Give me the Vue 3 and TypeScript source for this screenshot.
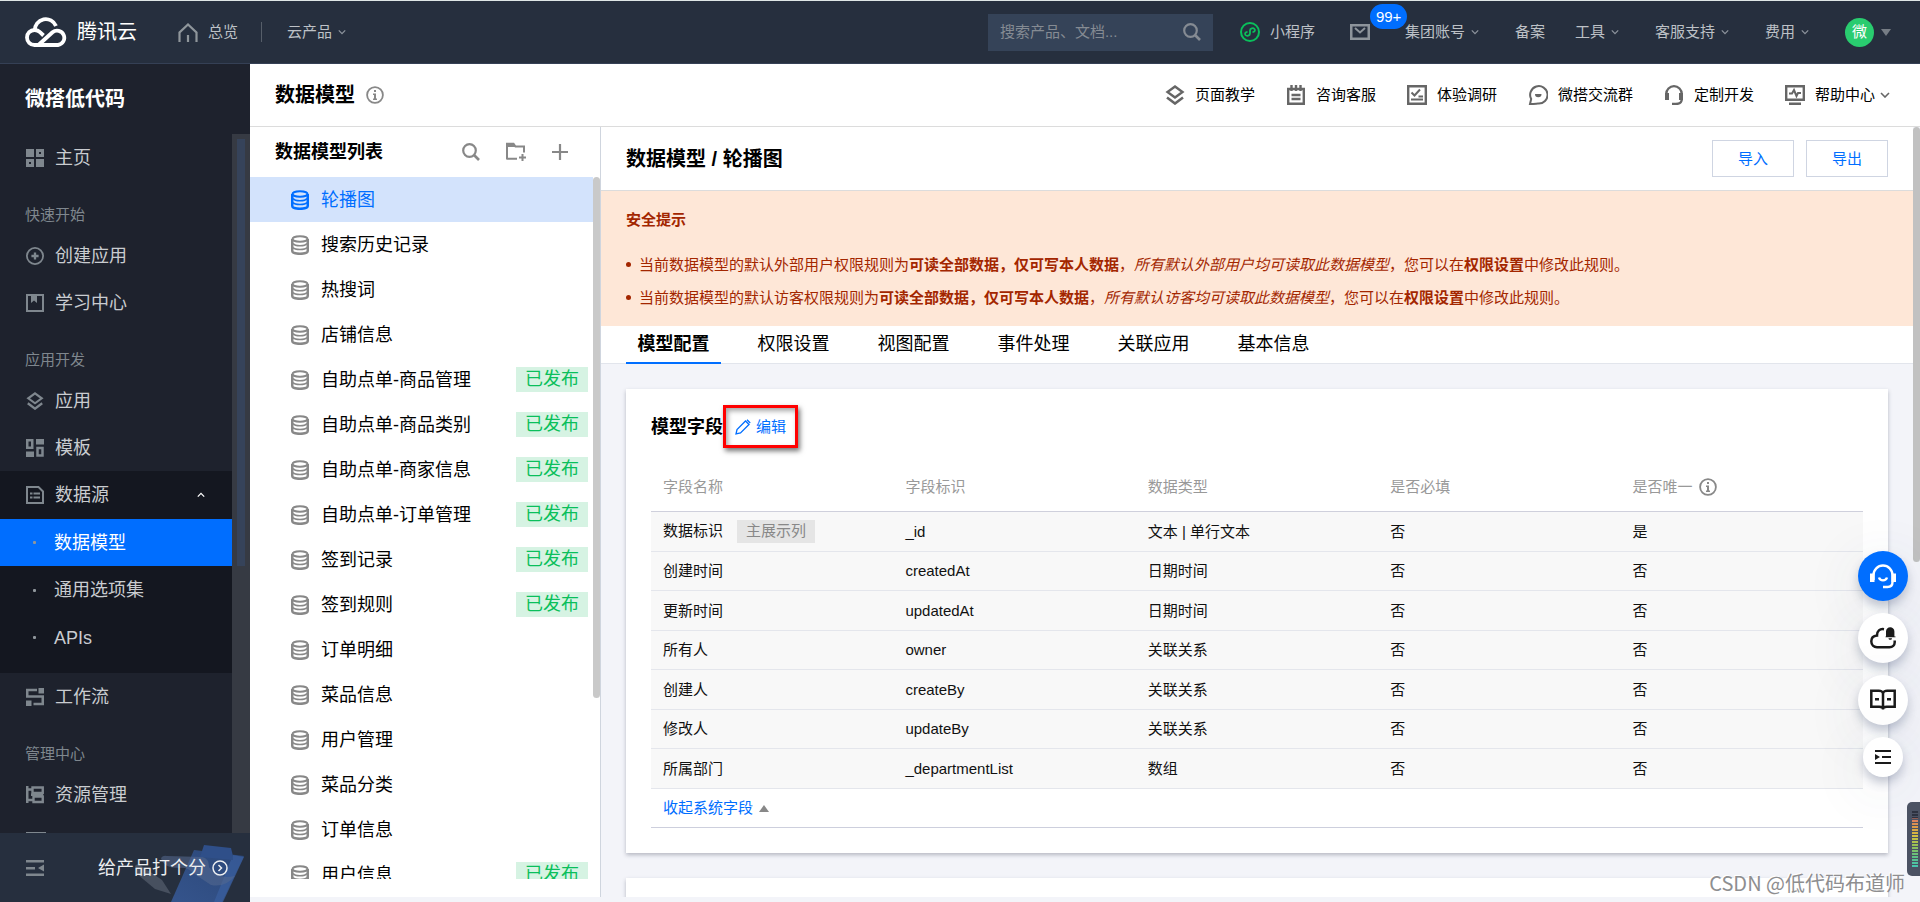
<script setup lang="ts">
import { ref } from 'vue'

interface NavItem { icon: string; label: string }
interface Model { name: string; published: boolean }
interface Field { name: string; key: string; type: string; required: string; unique: string; main?: boolean }

const accountLinks = [
  { label: '集团账号', menu: true },
  { label: '备案', menu: false },
  { label: '工具', menu: true },
  { label: '客服支持', menu: true },
  { label: '费用', menu: true },
]

const quickLinks: NavItem[] = [
  { icon: 'layers', label: '页面教学' },
  { icon: 'note', label: '咨询客服' },
  { icon: 'survey', label: '体验调研' },
  { icon: 'chat', label: '微搭交流群' },
  { icon: 'headset', label: '定制开发' },
  { icon: 'monitor', label: '帮助中心' },
]

const startItems: NavItem[] = [
  { icon: 'plus-circle', label: '创建应用' },
  { icon: 'book', label: '学习中心' },
]
const devItems: NavItem[] = [
  { icon: 'layers', label: '应用' },
  { icon: 'template', label: '模板' },
]
const sourceItems = ['数据模型', '通用选项集', 'APIs']

const models: Model[] = [
  { name: '轮播图', published: false },
  { name: '搜索历史记录', published: false },
  { name: '热搜词', published: false },
  { name: '店铺信息', published: false },
  { name: '自助点单-商品管理', published: true },
  { name: '自助点单-商品类别', published: true },
  { name: '自助点单-商家信息', published: true },
  { name: '自助点单-订单管理', published: true },
  { name: '签到记录', published: true },
  { name: '签到规则', published: true },
  { name: '订单明细', published: false },
  { name: '菜品信息', published: false },
  { name: '用户管理', published: false },
  { name: '菜品分类', published: false },
  { name: '订单信息', published: false },
  { name: '用户信息', published: true },
]

const tabs = ['模型配置', '权限设置', '视图配置', '事件处理', '关联应用', '基本信息']

const fields: Field[] = [
  { name: '数据标识', key: '_id', type: '文本 | 单行文本', required: '否', unique: '是', main: true },
  { name: '创建时间', key: 'createdAt', type: '日期时间', required: '否', unique: '否' },
  { name: '更新时间', key: 'updatedAt', type: '日期时间', required: '否', unique: '否' },
  { name: '所有人', key: 'owner', type: '关联关系', required: '否', unique: '否' },
  { name: '创建人', key: 'createBy', type: '关联关系', required: '否', unique: '否' },
  { name: '修改人', key: 'updateBy', type: '关联关系', required: '否', unique: '否' },
  { name: '所属部门', key: '_departmentList', type: '数组', required: '否', unique: '否' },
]

const currentModel = ref(0)
const currentTab = ref(0)
const keyword = ref('')
</script>

<template>
  <div class="app">
    <svg class="sprite" aria-hidden="true">
      <symbol id="i-chevron" viewBox="0 0 10 6"><path d="M1 1l4 4 4-4" fill="none" stroke="currentColor" stroke-width="1.6" /></symbol>
      <symbol id="i-search" viewBox="0 0 18 18"><circle cx="7.5" cy="7.5" r="6.3" fill="none" stroke="currentColor" stroke-width="2.2" /><path d="M12 12l5 5" stroke="currentColor" stroke-width="2.6" /></symbol>
      <symbol id="i-info" viewBox="0 0 18 18"><circle cx="9" cy="9" r="7.9" fill="none" stroke="currentColor" stroke-width="1.8" /><path d="M8 4h2v2H8zM7 7.5h3v5h1V14H7v-1.500h1V9H7z" fill="currentColor" /></symbol>
      <symbol id="i-home" viewBox="0 0 20 19"><path d="M1.500 19V9.500L10 1.500l8.500 8V19M10 12v7" fill="none" stroke="currentColor" stroke-width="2.2" /></symbol>
      <symbol id="i-mini" viewBox="0 0 20 20"><circle cx="10" cy="10" r="9" fill="none" stroke="currentColor" stroke-width="2" /><path d="M7.500 9.800c-2.200.2-3 1.800-2 3.200 1.300 1.500 4.500.8 4.500-1.500V8.500c0-2.300 3.200-3 4.500-1.500 1 1.400.2 3-2 3.200" fill="none" stroke="currentColor" stroke-width="1.800" /></symbol>
      <symbol id="i-mail" viewBox="0 0 20 16"><rect x="1.250" y="1.250" width="17.500" height="13.500" fill="none" stroke="currentColor" stroke-width="2.500" /><path d="M5 4l5 4.500L15 4" fill="none" stroke="currentColor" stroke-width="2" /></symbol>
      <symbol id="i-grid" viewBox="0 0 18 18"><path d="M0 0h8v8H0zM10 10h8v8h-8z" fill="currentColor" /><path d="M11.500 1.500h5v5h-5zM1.500 11.500h5v5h-5z" fill="none" stroke="currentColor" stroke-width="3" /></symbol>
      <symbol id="i-plus-circle" viewBox="0 0 20 20"><circle cx="10" cy="10" r="9" fill="none" stroke="currentColor" stroke-width="2" /><path d="M10 6v8M6 10h8" stroke="currentColor" stroke-width="2.600" /></symbol>
      <symbol id="i-book" viewBox="0 0 18 18"><rect x="1" y="1" width="16" height="16" fill="none" stroke="currentColor" stroke-width="2" /><path d="M5 2h6v7L8 6.500 5 9z" fill="currentColor" /></symbol>
      <symbol id="i-layers" viewBox="0 0 20 20"><path d="M10 1.500l7.500 5.500L10 12.500 2.500 7z" fill="none" stroke="currentColor" stroke-width="2.400" /><path d="M2 12.500l8 6 8-6" fill="none" stroke="currentColor" stroke-width="2.600" /></symbol>
      <symbol id="i-template" viewBox="0 0 18 18"><path d="M1.250 1.250h5v7.500h-5zM11.500 9h5v7.500h-5z" fill="none" stroke="currentColor" stroke-width="2.500" /><path d="M10 0h8v5.500h-8zM0 12.500h8V18H0z" fill="currentColor" /></symbol>
      <symbol id="i-source" viewBox="0 0 18 18"><path d="M1 1h11.500L17 5.500V17H1z" fill="none" stroke="currentColor" stroke-width="2" /><path d="M4 6.500h2.500v2H4zM7.500 6.500H14v2H7.500zM4 10.500h2.500v2H4zM7.500 10.500H14v2H7.500z" fill="currentColor" /></symbol>
      <symbol id="i-flow" viewBox="0 0 18 18"><path d="M11 2H1.250v6.500h15.500V16H7.500" fill="none" stroke="currentColor" stroke-width="2.500" /><path d="M12.500 0H18v5.500h-5.500zM0 12.500h5.500V18H0z" fill="currentColor" /></symbol>
      <symbol id="i-resource" viewBox="0 0 18 18"><path d="M1.250 0v17M0 3.500h6M1 14h6" fill="none" stroke="currentColor" stroke-width="2.500" /><path d="M6.500 1.500h10.250V7H6.500zM7.500 10.500h9.250V16H7.500zM5 8.800h12" fill="none" stroke="currentColor" stroke-width="2.400" /></symbol>
      <symbol id="i-panel" viewBox="0 0 20 20"><path d="M0 0h20v2H0zM0 17h20v2H0zM1 2h2v15H1z" fill="currentColor" /></symbol>
      <symbol id="i-collapse" viewBox="0 0 18 16"><path d="M0 0h18v2.400H0zM0 7h9v2.400H0zM0 13.600h18V16H0zM18 4.500v7L12 8z" fill="currentColor" /></symbol>
      <symbol id="i-note" viewBox="0 0 20 20"><path d="M2.200 4h15.600v14.800H2.200zM5.500 0v6M10 0v6M14.500 0v6M5.500 10h9M5.500 14h9" fill="none" stroke="currentColor" stroke-width="2.400" /></symbol>
      <symbol id="i-survey" viewBox="0 0 20 20"><path d="M1.200 1.200h17.600v17.600H1.200z" fill="none" stroke="currentColor" stroke-width="2.400" /><path d="M4.500 7.500l3 3 5.500-6M4 14.500h12M11.500 11.500H16" fill="none" stroke="currentColor" stroke-width="2" /></symbol>
      <symbol id="i-chat" viewBox="0 0 20 20"><path d="M2 19l1.200-5A8.700 8.700 0 1 1 10 18.500c-1.500 0-3 .5-8 .5z" fill="none" stroke="currentColor" stroke-width="2" /><path d="M7 9h6.500a3.250 3.250 0 0 1-6.500 0z" fill="currentColor" /></symbol>
      <symbol id="i-headset" viewBox="0 0 20 20"><path d="M2.200 14V9a7.800 7.800 0 0 1 15.600 0v5c0 3-2 5-6 5H8" fill="none" stroke="currentColor" stroke-width="2.300" /><path d="M1 8h4v7H1zM15 8h4v7h-4z" fill="currentColor" /></symbol>
      <symbol id="i-monitor" viewBox="0 0 20 20"><path d="M1.200 1.200h17.600v13.600H1.200z" fill="none" stroke="currentColor" stroke-width="2.400" /><path d="M4 8.500h3l2-3.500 2.500 6L13 8h3" fill="none" stroke="currentColor" stroke-width="2" /><path d="M4 17.500h12V20H4z" fill="currentColor" /></symbol>
      <symbol id="i-folder" viewBox="0 0 20 19"><path d="M1 17V1.200h6.500L9.500 4H18v6M1 16.200h10" fill="none" stroke="currentColor" stroke-width="2" /><path d="M1 1h7l1.500 3.500H1zM15.500 11.500h2V18.500h-2zM13 14h7v2h-7z" fill="currentColor" /></symbol>
      <symbol id="i-plus" viewBox="0 0 16 16"><path d="M8 0v16M0 8h16" stroke="currentColor" stroke-width="2.200" /></symbol>
      <symbol id="i-database" viewBox="0 0 18 20"><path d="M1.250 4v12c0 1.600 3 2.800 7.750 2.800s7.750-1.200 7.750-2.800V4" fill="none" stroke="currentColor" stroke-width="2.500" /><ellipse cx="9" cy="4" rx="7.500" ry="2.800" fill="none" stroke="currentColor" stroke-width="2" /><path d="M2 8.500q1.500 2.200 7 2.200t7-2.200M2 12.500q1.500 2 7 2t7-2" fill="none" stroke="currentColor" stroke-width="1.600" /></symbol>
      <symbol id="i-pencil" viewBox="0 0 16 16"><path d="M1 15l1-4.500L10.500 2 14 5.500 5.500 14zM12 .8L15.200 4" fill="none" stroke="currentColor" stroke-width="1.300" /></symbol>
      <symbol id="i-support" viewBox="0 0 26 26"><path d="M3.500 17v-5a9.500 9.500 0 0 1 19 0v7c0 3-1.500 5-5 5H13" fill="none" stroke="currentColor" stroke-width="2.400" /><path d="M0 10.500h4.500v8.500H0zM21.500 10.500H26v8.500h-4.500z" fill="currentColor" /><path d="M9 14.500a4.200 4.200 0 0 0 8 0" fill="none" stroke="currentColor" stroke-width="2.400" /></symbol>
      <symbol id="i-cloud-bell" viewBox="0 0 26 22"><path d="M14 2.200c-4-.8-7.200 2-7 6.300-3.400.3-5.700 2.600-5.700 5.800 0 3.600 2.500 5.900 5.700 5.900h12.500c3 0 5.200-2.200 5.200-5v-1.700" fill="none" stroke="currentColor" stroke-width="2.500" /><path d="M16 9.500V4.500a4.200 4.200 0 0 1 8.400 0v5h1.100v.8H15.500v-.8zM18.500 11.300h3.500c0 1-.8 1.500-1.700 1.500s-1.800-.5-1.800-1.500z" fill="currentColor" /></symbol>
      <symbol id="i-read" viewBox="0 0 26 21"><path d="M1.300 1.300h7.500C11 1.300 13 2.500 13 4c0-1.500 2-2.700 4.200-2.700h7.500v16h-8c-2 0-3.700.7-3.700 1.700 0-1-1.700-1.700-3.700-1.700h-8zM13 4v16" fill="none" stroke="currentColor" stroke-width="2.500" /><path d="M5 8.500h4V11H5zM17 8.500h4V11h-4z" fill="currentColor" /></symbol>
      <symbol id="i-expand" viewBox="0 0 16 14"><path d="M0 0h16v2H0zM7 6h9v2H7zM0 12h16v2H0zM0 4v6l5-3z" fill="currentColor" /></symbol>
    </svg>

    <header class="topbar">
      <a class="brand" href="#">
        <svg class="brand-mark" viewBox="0 0 42 30" aria-hidden="true">
          <path d="M18.500 18.500L15 15.200A7.500 7.500 0 0 0 9.500 13a7.500 7.500 0 0 0 0 15H33a7.200 7.200 0 1 0-5.500-12.700L14 27.500" fill="none" stroke="#fff" stroke-width="3.800" />
          <path d="M9.800 13.500A11 11 0 0 1 31 9" fill="none" stroke="#fff" stroke-width="3.800" />
        </svg>
        <span>腾讯云</span>
      </a>
      <a class="top-link home" href="#"><svg class="home-icon"><use href="#i-home" /></svg>总览</a>
      <span class="divider"></span>
      <a class="top-link" href="#">云产品<svg class="chev"><use href="#i-chevron" /></svg></a>
      <form class="search" @submit.prevent>
        <input v-model="keyword" aria-label="搜索" placeholder="搜索产品、文档..." />
        <button type="submit" aria-label="搜索"><svg class="s18"><use href="#i-search" /></svg></button>
      </form>
      <nav class="account">
        <a class="top-link mini" href="#"><svg class="s20"><use href="#i-mini" /></svg>小程序</a>
        <a class="mail" href="#" aria-label="站内信"><svg class="mail-icon"><use href="#i-mail" /></svg><span class="badge">99+</span></a>
        <a v-for="link in accountLinks" :key="link.label" class="top-link" :class="{ menu: link.menu }" href="#">{{ link.label }}<svg v-if="link.menu" class="chev"><use href="#i-chevron" /></svg></a>
        <button class="user" type="button"><span class="avatar">微</span><span class="caret down"></span></button>
      </nav>
    </header>

    <div class="body">
      <aside class="sidebar">
        <h1>微搭低代码</h1>
        <div class="side-scroll">
          <nav class="side-nav">
            <a class="side-item" href="#"><svg class="s18"><use href="#i-grid" /></svg>主页</a>
            <p class="side-label">快速开始</p>
            <a v-for="item in startItems" :key="item.label" class="side-item" href="#"><svg class="s18"><use :href="'#i-' + item.icon" /></svg>{{ item.label }}</a>
            <p class="side-label">应用开发</p>
            <a v-for="item in devItems" :key="item.label" class="side-item" href="#"><svg class="s18"><use :href="'#i-' + item.icon" /></svg>{{ item.label }}</a>
            <div class="side-group">
              <button class="side-item" type="button"><svg class="s18"><use href="#i-source" /></svg>数据源<svg class="chev up"><use href="#i-chevron" /></svg></button>
              <a v-for="(item, i) in sourceItems" :key="item" class="side-item sub" :class="{ active: i === 0 }" href="#"><span class="dot"></span>{{ item }}</a>
            </div>
            <a class="side-item" href="#"><svg class="s18"><use href="#i-flow" /></svg>工作流</a>
            <p class="side-label">管理中心</p>
            <a class="side-item" href="#"><svg class="s18"><use href="#i-resource" /></svg>资源管理</a>
            <a class="side-item" href="#" aria-label="更多"><svg class="s20"><use href="#i-panel" /></svg></a>
          </nav>
          <div class="side-track"><div class="side-thumb"></div></div>
        </div>
        <div class="side-foot">
          <svg class="foot-art" viewBox="0 0 110 58" aria-hidden="true">
            <defs>
              <linearGradient id="board" x1="1" y1="0" x2="0" y2="1"><stop offset="0" stop-color="#2b4778" /><stop offset="1" stop-color="#35548c" /></linearGradient>
            </defs>
            <path d="M0 22q2-3 5-1l22 15 9 14-16-5L2 30z" fill="#47505f" />
            <path d="M59 6l50 6-22 46H36z" fill="url(#board)" />
            <path d="M98 11l11 2-21 45h-9z" fill="#3b5f9f" opacity=".7" />
            <path d="M26 14q2-3 6-2l36 1q6 2 6 10 8 13 26 9-10 12-24 9l-18-12q-5-6-14-5-16 0-18-10z" fill="#566a90" opacity=".55" />
            <path d="M69 1l27 3q2 6 2 12l-33-3z" fill="#2f4f89" />
          </svg>
          <button type="button" aria-label="收起菜单"><svg class="collapse"><use href="#i-collapse" /></svg></button>
          <a class="rate" href="#">给产品打个分
            <svg class="rate-icon" viewBox="0 0 16 16"><circle cx="8" cy="8" r="7" fill="none" stroke="currentColor" stroke-width="1.500" /><path d="M6.500 5l3 3-3 3" fill="none" stroke="currentColor" stroke-width="1.500" /></svg>
          </a>
        </div>
      </aside>

      <div class="page">
        <div class="page-head">
          <h2>数据模型</h2>
          <svg class="s18 grey"><use href="#i-info" /></svg>
          <nav class="quick">
            <a v-for="(item, i) in quickLinks" :key="item.label" href="#"><svg class="s20"><use :href="'#i-' + item.icon" /></svg>{{ item.label }}<svg v-if="i === quickLinks.length - 1" class="help-chev"><use href="#i-chevron" /></svg></a>
          </nav>
        </div>

        <div class="columns">
          <section class="models">
            <div class="models-head">
              <h3>数据模型列表</h3>
              <button type="button" aria-label="搜索模型"><svg class="s18"><use href="#i-search" /></svg></button>
              <button type="button" aria-label="新建分组"><svg class="s20"><use href="#i-folder" /></svg></button>
              <button type="button" aria-label="新建模型"><svg class="s16"><use href="#i-plus" /></svg></button>
            </div>
            <div class="models-body">
              <ul>
                <li v-for="(m, i) in models" :key="m.name">
                  <button type="button" class="model" :class="{ active: i === currentModel }" @click="currentModel = i">
                    <svg class="db"><use href="#i-database" /></svg>
                    <span class="model-name">{{ m.name }}</span>
                    <span v-if="m.published" class="published">已发布</span>
                  </button>
                </li>
              </ul>
              <div class="models-thumb"></div>
            </div>
          </section>

          <main class="detail">
            <div class="detail-inner">
              <div class="detail-head">
                <h2>数据模型 / 轮播图</h2>
                <button type="button">导入</button>
                <button type="button">导出</button>
              </div>
              <div class="notice">
                <h4>安全提示</h4>
                <ul>
                  <li>当前数据模型的默认外部用户权限规则为<b>可读全部数据，仅可写本人数据</b>，<i>所有默认外部用户均可读取此数据模型</i>，您可以在<b>权限设置</b>中修改此规则。</li>
                  <li>当前数据模型的默认访客权限规则为<b>可读全部数据，仅可写本人数据</b>，<i>所有默认访客均可读取此数据模型</i>，您可以在<b>权限设置</b>中修改此规则。</li>
                </ul>
              </div>
              <div class="tabs" role="tablist">
                <button v-for="(t, i) in tabs" :key="t" type="button" role="tab" :aria-selected="i === currentTab" :class="{ active: i === currentTab }" @click="currentTab = i">{{ t }}</button>
              </div>
              <div class="cards">
                <section class="card">
                  <div class="card-head">
                    <h3>模型字段</h3>
                    <button type="button" class="edit"><svg class="s16"><use href="#i-pencil" /></svg>编辑</button>
                  </div>
                  <table>
                    <thead>
                      <tr>
                        <th>字段名称</th><th>字段标识</th><th>数据类型</th><th>是否必填</th>
                        <th><span class="th-info">是否唯一<svg class="s18"><use href="#i-info" /></svg></span></th>
                      </tr>
                    </thead>
                    <tbody>
                      <tr v-for="f in fields" :key="f.key">
                        <td>{{ f.name }}<span v-if="f.main" class="main-tag">主展示列</span></td>
                        <td>{{ f.key }}</td>
                        <td>{{ f.type }}</td>
                        <td>{{ f.required }}</td>
                        <td>{{ f.unique }}</td>
                      </tr>
                      <tr class="fold"><td colspan="5"><button type="button">收起系统字段<span class="caret up-caret"></span></button></td></tr>
                    </tbody>
                  </table>
                </section>
                <section class="card next"></section>
              </div>
            </div>
            <div class="detail-track"><div class="detail-thumb"></div></div>
          </main>
        </div>
      </div>
    </div>

    <div class="floats">
      <button type="button" class="primary" aria-label="在线客服"><svg class="f26"><use href="#i-support" /></svg></button>
      <button type="button" aria-label="消息"><svg class="f26"><use href="#i-cloud-bell" /></svg></button>
      <button type="button" aria-label="文档"><svg class="f26"><use href="#i-read" /></svg></button>
      <button type="button" class="small" aria-label="展开"><svg class="s16"><use href="#i-expand" /></svg></button>
    </div>
    <div class="meter"><div class="meter-bars"></div></div>
    <div class="watermark">CSDN @低代码布道师</div>
  </div>
</template>

<style>
body { margin: 0; }
</style>

<style scoped>
* { box-sizing: border-box; }
.app {
  position: relative;
  display: flex;
  flex-direction: column;
  height: 100vh;
  overflow: hidden;
  background: #f3f4f9;
  color: #000;
  font: 15px/20px "Liberation Sans", "Noto Sans CJK SC", sans-serif;
}
h1, h2, h3, h4, p, ul { margin: 0; padding: 0; }
ul { list-style: none; }
a { color: inherit; text-decoration: none; }
button { margin: 0; padding: 0; border: 0; background: none; color: inherit; font: inherit; cursor: pointer; }
svg { display: block; flex: none; }
.sprite { position: absolute; width: 0; height: 0; }
.s16 { width: 16px; height: 16px; }
.s18 { width: 18px; height: 18px; }
.s20 { width: 20px; height: 20px; }
.f26 { width: 26px; height: 26px; }
.chev { width: 8px; height: 6px; margin-left: 6px; color: #8c939c; }
.caret { border: 5px solid transparent; }

.topbar {
  flex: none;
  display: flex;
  align-items: center;
  height: 64px;
  padding: 0 29px 0 25px;
  border-top: 1px solid #dfe6e6;
  border-bottom: 1px solid #354055;
  background: #262f3e;
  color: #bdc1c6;
}
.brand { display: flex; align-items: center; gap: 10px; color: #fff; font-size: 20px; }
.brand-mark { width: 42px; height: 30px; }
.top-link { display: flex; align-items: center; white-space: nowrap; }
.home { gap: 10px; margin-left: 41px; }
.home-icon { width: 20px; height: 19px; color: #8f969b; }
.divider { width: 1px; height: 20px; margin: 0 25px 0 23px; background: #565e69; }
.search { display: flex; width: 225px; height: 37px; margin-left: auto; margin-right: 27px; padding: 0 12px; background: #354358; }
.search input { flex: 1; min-width: 0; padding: 0; border: 0; outline: 0; background: none; color: #fff; font: inherit; }
.search input::placeholder { color: #858b93; opacity: 1; }
.search button { color: #858b93; }
.account { display: flex; align-items: center; gap: 30px; }
.mini { gap: 10px; padding-right: 5px; }
.mini svg { color: #0abf5b; }
.mail { position: relative; padding-right: 5px; color: #8d949b; }
.mail-icon { width: 20px; height: 16px; }
.badge {
  position: absolute;
  left: 20px;
  bottom: 11px;
  height: 25px;
  padding: 0 6px;
  border-radius: 13px;
  background: #006eff;
  color: #fff;
  line-height: 25px;
}
.menu { padding-right: 6px; }
.user { display: flex; align-items: center; gap: 7px; }
.avatar { width: 29px; height: 29px; border-radius: 50%; background: #29cc6f; color: #fff; line-height: 28px; }
.down { margin-top: 5px; border-top: 7px solid #767d85; }

.body { flex: 1; display: flex; min-height: 0; }
.sidebar { flex: none; display: flex; flex-direction: column; width: 250px; background: #1e222d; color: #c9ccd0; }
.sidebar h1 { height: 70px; padding-left: 25px; color: #fff; font-size: 20px; line-height: 71px; }
.side-scroll { flex: 1; display: flex; min-height: 0; }
.side-nav { flex: 1; overflow: hidden; }
.side-item { display: flex; align-items: center; gap: 11px; width: 100%; height: 47px; padding-left: 26px; font-size: 18px; white-space: nowrap; }
.side-item svg { color: #7f878e; }
.side-label { padding: 17px 0 0 25px; color: #7f878e; line-height: 34px; }
.side-group { padding-bottom: 12px; background: #141720; }
.side-group .side-item { height: 48px; }
.side-group .active { height: 47px; background: #006eff; color: #fff; }
.side-group .side-item:last-child { height: 47px; }
.side-item .up { margin: 0 27px 0 auto; color: #fff; transform: rotate(180deg); }
.side-item.sub { gap: 18px; padding-left: 33px; }
.dot { width: 3px; height: 3px; border-radius: 1px; background: #8f969b; }
.side-track { width: 18px; padding: 5px; background: #363a43; }
.side-thumb { width: 8px; height: 62%; background: #36435a; }
.side-foot { position: relative; display: flex; align-items: center; flex: none; height: 69px; padding: 0 22px 0 26px; background: #262f3e; }
.side-foot button { position: relative; color: #7f878e; }
.collapse { width: 18px; height: 16px; }
.foot-art { position: absolute; right: 5px; bottom: 0; width: 110px; height: 58px; }
.rate { position: relative; display: flex; align-items: center; gap: 6px; margin-left: auto; color: #eceef0; font-size: 18px; }
.rate-icon { width: 16px; height: 16px; }

.page { flex: 1; display: flex; flex-direction: column; min-width: 0; padding-bottom: 5px; }
.page-head { flex: none; display: flex; align-items: center; height: 63px; padding: 0 30px 0 25px; border-bottom: 1px solid #dcdcdc; background: #fff; }
.page-head h2 { margin-right: 11px; font-size: 20px; }
.grey { color: #888; }
.quick { display: flex; gap: 31px; margin-left: auto; }
.quick a { display: flex; align-items: center; gap: 10px; white-space: nowrap; }
.quick svg { color: #666; }
.quick .help-chev { width: 10px; height: 6px; margin-left: -5px; }
.columns { flex: 1; display: flex; min-height: 0; }

.models { flex: none; display: flex; flex-direction: column; width: 351px; padding-bottom: 18px; border-right: 1px solid #cfd5de; background: #fff; }
.models-head { display: flex; align-items: center; gap: 26px; height: 50px; padding: 0 32px 0 25px; }
.models-head h3 { margin-right: auto; font-size: 18px; }
.models-head button { color: #888; }
.models-body { flex: 1; display: flex; min-height: 0; overflow: hidden; }
.models-body ul { flex: 1; }
.model { display: flex; align-items: center; width: 100%; height: 45px; padding: 0 5px 0 41px; font-size: 18px; text-align: left; }
.model.active { background: #d3e3fc; color: #006eff; }
.db { width: 18px; height: 20px; color: #888; }
.active .db { color: #006eff; }
.model-name { flex: 1; margin-left: 12px; }
.published { width: 72px; height: 25px; background: #d6f3e3; color: #0abf5b; line-height: 24px; text-align: center; }
.models-thumb { width: 7px; height: 521px; border-radius: 4px; background: #c9c9c9; }

.detail { flex: 1; display: flex; min-width: 0; overflow: hidden; }
.detail-inner { flex: 1; min-width: 0; }
.detail-track { width: 7px; background: #f3f4f9; }
.detail-thumb { height: 435px; border-radius: 4px; background: #c1c1c1; }
.detail-head { display: flex; align-items: center; gap: 12px; height: 64px; padding: 0 25px; border-bottom: 1px solid #dcdcdc; background: #fff; }
.detail-head h2 { margin-right: auto; font-size: 20px; }
.detail-head button { width: 82px; height: 37px; border: 1px solid #cfd5e2; color: #006eff; }
.notice { padding: 19px 25px 12px; background: #fee7d7; color: #a32600; }
.notice h4 { margin-bottom: 18px; font-size: 15px; line-height: 20px; }
.notice li { display: block; line-height: 33px; }
.notice li::before { content: ""; display: inline-block; width: 5px; height: 5px; margin: 0 8px 3px 0; border-radius: 50%; background: #a32600; }
.tabs { display: flex; gap: 25px; height: 38px; padding: 0 25px; border-bottom: 1px solid #e2e5ec; background: #fff; }
.tabs button { width: 95px; height: 38px; border-bottom: 2px solid transparent; font-size: 18px; line-height: 36px; }
.tabs .active { border-color: #006eff; font-weight: 700; }
.cards { display: flex; flex-direction: column; gap: 25px; padding: 25px; }
.card { padding: 16px 25px 25px; background: #fff; box-shadow: 0 2px 4px rgba(54, 58, 80, .32); }
.next { height: 200px; }
.card-head { display: flex; align-items: center; }
.card-head h3 { font-size: 18px; }
.edit { display: flex; align-items: center; justify-content: center; gap: 5px; width: 75px; height: 43px; border: 3px solid #f00; color: #006eff; box-shadow: 2px 3px 5px rgba(0, 0, 0, .55), inset 2px 3px 5px rgba(0, 0, 0, .35); }
table { width: 100%; margin-top: 16px; border-collapse: separate; border-spacing: 0; table-layout: fixed; }
th { height: 48px; padding: 0 12px 2px; border-bottom: 1px solid #cfd0dc; color: #999; font-weight: 400; text-align: left; }
.th-info { display: flex; align-items: center; gap: 6px; }
.th-info svg { color: #888; }
td { height: 39px; padding: 0 12px; border-bottom: 1px solid #e4e6ec; background: #f8f8f8; color: #111; }
tr:nth-child(odd) td { height: 40px; }
.main-tag { display: inline-block; height: 23px; margin-left: 14px; padding: 0 9px; background: #e5e5e5; color: #888; line-height: 22px; }
.fold td { border-color: #cdcfdd; background: none; }
.fold button { display: flex; align-items: center; gap: 6px; color: #006eff; }
.up-caret { margin-top: -5px; border-bottom: 7px solid #888; }

.floats { position: absolute; right: 12px; top: 551px; display: flex; flex-direction: column; align-items: center; gap: 12px; }
.floats button { display: flex; align-items: center; justify-content: center; width: 50px; height: 50px; border-radius: 50%; background: #fff; color: #1a1a1a; box-shadow: 0 6px 10px rgba(60, 75, 110, .28), 0 12px 60px rgba(60, 75, 110, .12); }
.floats .primary { background: #006eff; color: #fff; }
.floats .small { width: 40px; height: 40px; }
.meter { position: absolute; right: 0; top: 802px; width: 13px; height: 74px; padding: 9px 2px 8px 5px; border-radius: 5px 0 0 5px; background: #4b5263; }
.meter-bars { height: 57px; background: repeating-linear-gradient(transparent 0 2px, #4b5263 2px 3px), linear-gradient(#2d3240 0 12%, #d97a62 14%, #dba045 30%, #d3c442 45%, #97c254 60%, #5fc083 80%, #43c7b5); }
.watermark { position: absolute; right: 15px; bottom: 4px; color: #8e8e90; font: 20px/30px "Noto Sans CJK SC", sans-serif; text-shadow: -1px -1px 0 #fff; }
</style>
